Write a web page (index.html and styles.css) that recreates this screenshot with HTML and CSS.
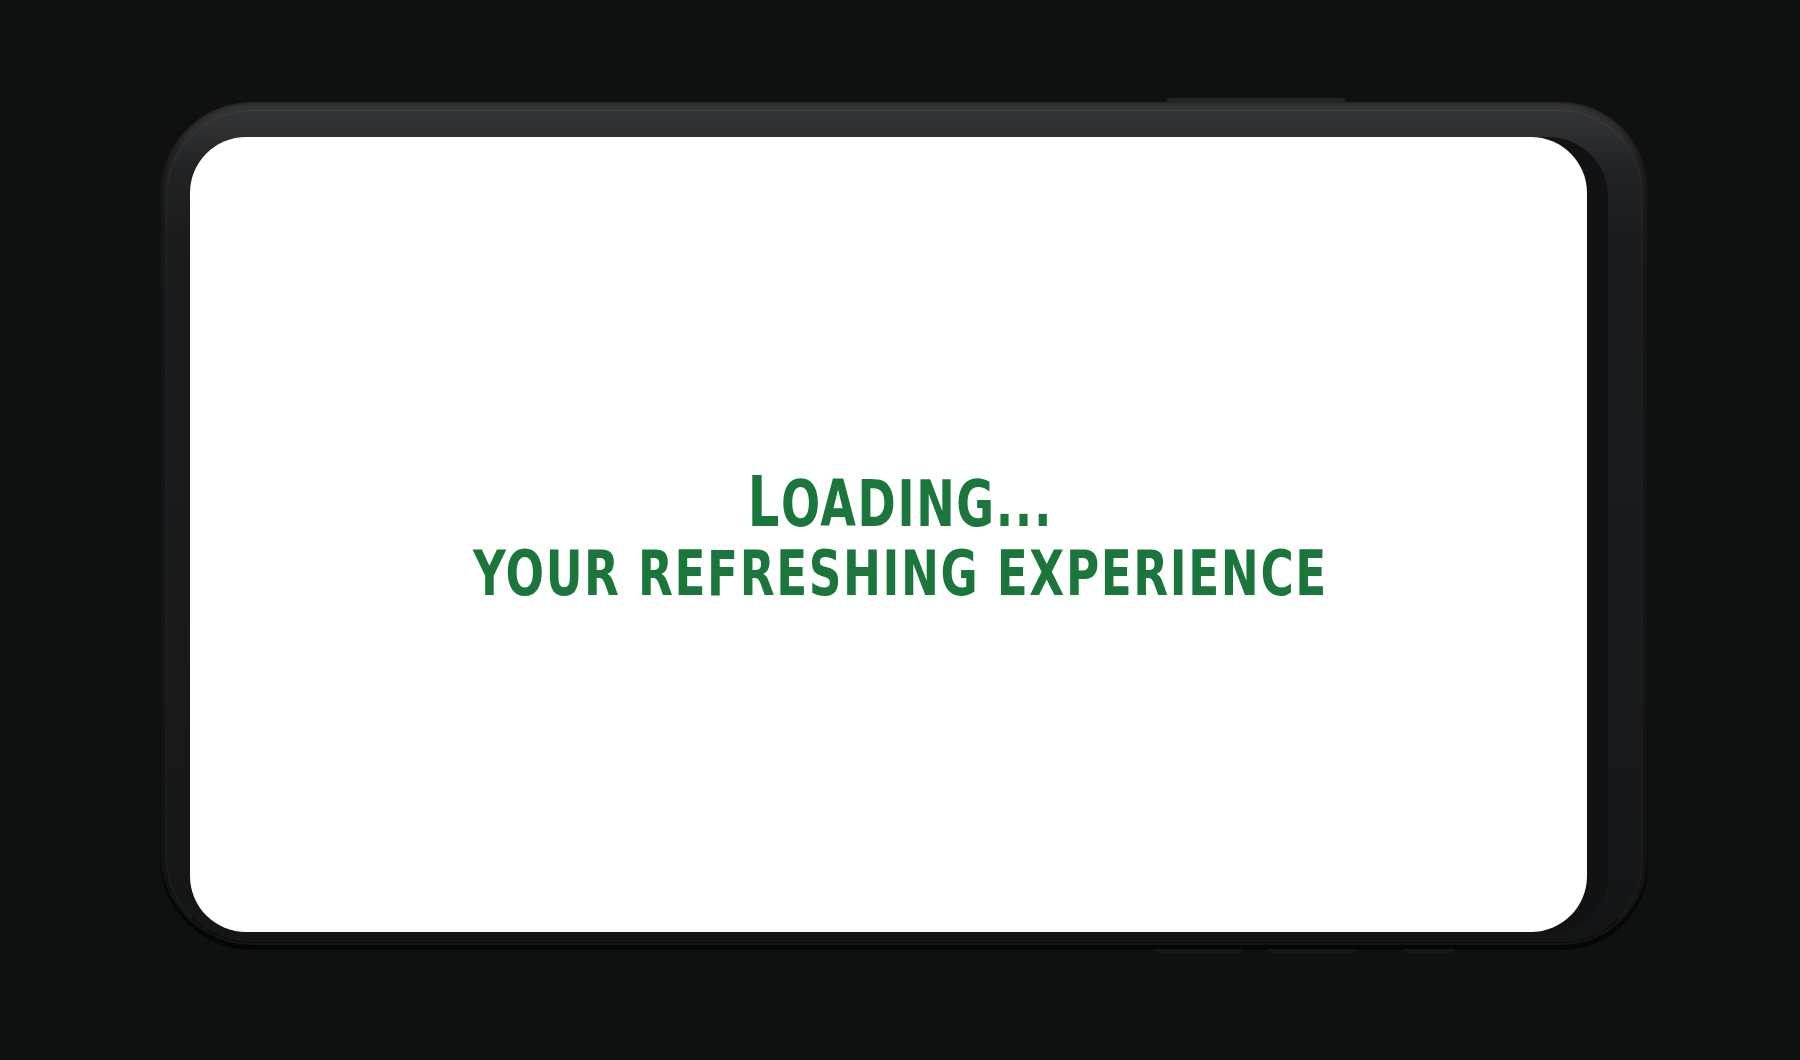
FILE: index.html
```html
<!DOCTYPE html>
<html lang="en">
<head>
<meta charset="utf-8">
<title>Loading</title>
<link rel="stylesheet" href="styles.css">
</head>
<body>
<div class="stage">
  <div class="phone">
    <span class="btn btn-top"></span>
    <span class="btn btn-b1"></span>
    <span class="btn btn-b2"></span>
    <span class="btn btn-b3"></span>
    <div class="screen-wrap">
      <div class="screen">
        <div class="loading">
          <div class="line line1"><span class="big">L</span>OADING...</div>
          <div class="line line2">YOUR REFRESHING EXPERIENCE</div>
        </div>
      </div>
    </div>
  </div>
</div>
</body>
</html>
```

FILE: styles.css
```css
html, body {
  margin: 0;
  padding: 0;
}
body {
  background: #0f1111;
  width: 1800px;
  height: 1060px;
  overflow: hidden;
  font-family: "DejaVu Sans Condensed", "Liberation Sans", sans-serif;
}
.stage {
  padding: 102px 0 0 160px;
}
.phone {
  position: relative;
  width: 1488px;
  height: 848px;
  box-sizing: border-box;
  padding: 35px 40px 18px 30px;
  border-radius: 92px 88px 86px 92px;
  background: linear-gradient(to bottom, #353638 0px, #2e2f31 30px, #232426 60px, #1a1b1c 140px, #18191a 70%, #141516 100%);
  box-shadow: inset 0 -5px 0 #050606, inset 3px 0 4px rgba(0,0,0,0.35), inset -3px 0 4px rgba(0,0,0,0.35);
  display: flex;
}
.phone::before {
  content: "";
  position: absolute;
  left: 6px;
  right: 6px;
  top: 8px;
  bottom: 7px;
  border-radius: 86px 82px 80px 86px;
  border: 1px solid rgba(255,255,255,0.05);
  border-bottom-color: rgba(0,0,0,0.5);
  pointer-events: none;
}
.btn {
  position: absolute;
  background: #1d1e20;
  border-radius: 3px;
}
.btn-top {
  left: 1007px;
  top: -4px;
  width: 178px;
  height: 5px;
  background: #232426;
  border-radius: 3px 3px 0 0;
}
.btn-b1, .btn-b2, .btn-b3 {
  bottom: -3px;
  height: 4px;
  background: #161718;
  border-radius: 0 0 3px 3px;
}
.btn-b1 { left: 995px; width: 88px; }
.btn-b2 { left: 1108px; width: 88px; }
.btn-b3 { left: 1244px; width: 51px; }
.screen-wrap {
  flex: 1;
  display: flex;
  background: #111213;
  border-radius: 56px 60px 56px 56px;
  padding-right: 21px;
}
.screen {
  flex: 1;
  background: #ffffff;
  border-radius: 56px;
  display: flex;
  align-items: center;
  justify-content: center;
  padding-left: 24px;
  padding-top: 6px;
}
.loading {
  color: #1b763c;
  font-weight: bold;
  text-align: center;
  transform: scaleX(0.8);
}
.line {
  white-space: nowrap;
  letter-spacing: 2px;
}
.line1 {
  font-size: 64px;
  line-height: 69px;
}
.line1 .big {
  font-size: 69px;
}
.line2 {
  font-size: 63px;
  line-height: 69px;
}
```
